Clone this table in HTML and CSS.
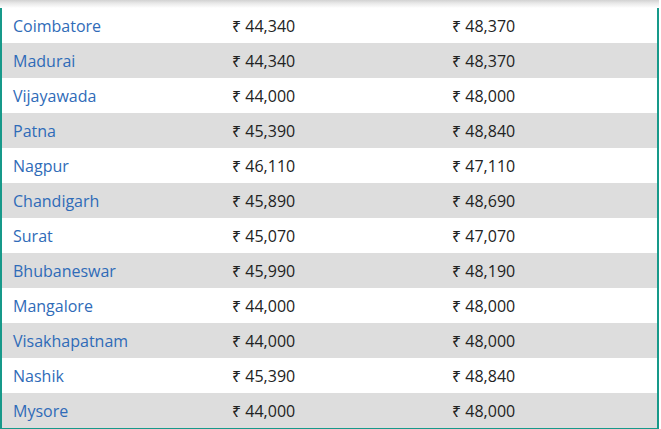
FILE: index.html
```html
<!DOCTYPE html>
<html>
<head>
<meta charset="utf-8">
<link rel="stylesheet" href="styles.css">
</head>
<body>
<div class="shade"></div>
<div class="frame">
<table class="rates">
<colgroup><col class="c1"><col class="c2"><col class="c3"></colgroup>
<tbody>
<tr><td><a class="city">Coimbatore</a></td><td>₹ 44,340</td><td>₹ 48,370</td></tr>
<tr><td><a class="city">Madurai</a></td><td>₹ 44,340</td><td>₹ 48,370</td></tr>
<tr><td><a class="city">Vijayawada</a></td><td>₹ 44,000</td><td>₹ 48,000</td></tr>
<tr><td><a class="city">Patna</a></td><td>₹ 45,390</td><td>₹ 48,840</td></tr>
<tr><td><a class="city">Nagpur</a></td><td>₹ 46,110</td><td>₹ 47,110</td></tr>
<tr><td><a class="city">Chandigarh</a></td><td>₹ 45,890</td><td>₹ 48,690</td></tr>
<tr><td><a class="city">Surat</a></td><td>₹ 45,070</td><td>₹ 47,070</td></tr>
<tr><td><a class="city">Bhubaneswar</a></td><td>₹ 45,990</td><td>₹ 48,190</td></tr>
<tr><td><a class="city">Mangalore</a></td><td>₹ 44,000</td><td>₹ 48,000</td></tr>
<tr><td><a class="city">Visakhapatnam</a></td><td>₹ 44,000</td><td>₹ 48,000</td></tr>
<tr><td><a class="city">Nashik</a></td><td>₹ 45,390</td><td>₹ 48,840</td></tr>
<tr><td><a class="city">Mysore</a></td><td>₹ 44,000</td><td>₹ 48,000</td></tr>
</tbody>
</table>
</div>
</body>
</html>
```
FILE: styles.css
```css
html, body {
  margin: 0;
  padding: 0;
  background: #ffffff;
}
body {
  width: 661px;
  height: 429px;
  overflow: hidden;
  font-family: "Open Sans", "Noto Sans", "DejaVu Sans", sans-serif;
  font-size: 16px;
  color: #222222;
}
.shade {
  height: 8px;
  width: 659px;
  background: linear-gradient(to bottom, #d2d2d2 0%, #e8e8e8 40%, #ffffff 100%);
}
.frame {
  width: 655px;
  border: 2px solid #17998a;
  border-top: none;
}
.rates {
  width: 100%;
  border-collapse: collapse;
  table-layout: fixed;
}
.c1 { width: 219px; }
.c2 { width: 220px; }
.rates td {
  height: 35px;
  padding: 0 0 0 11px;
  vertical-align: middle;
  white-space: nowrap;
}
.rates tr:nth-child(even) td {
  background: #dddddd;
}
.city {
  color: #2f6bb8;
  text-decoration: none;
}
```
